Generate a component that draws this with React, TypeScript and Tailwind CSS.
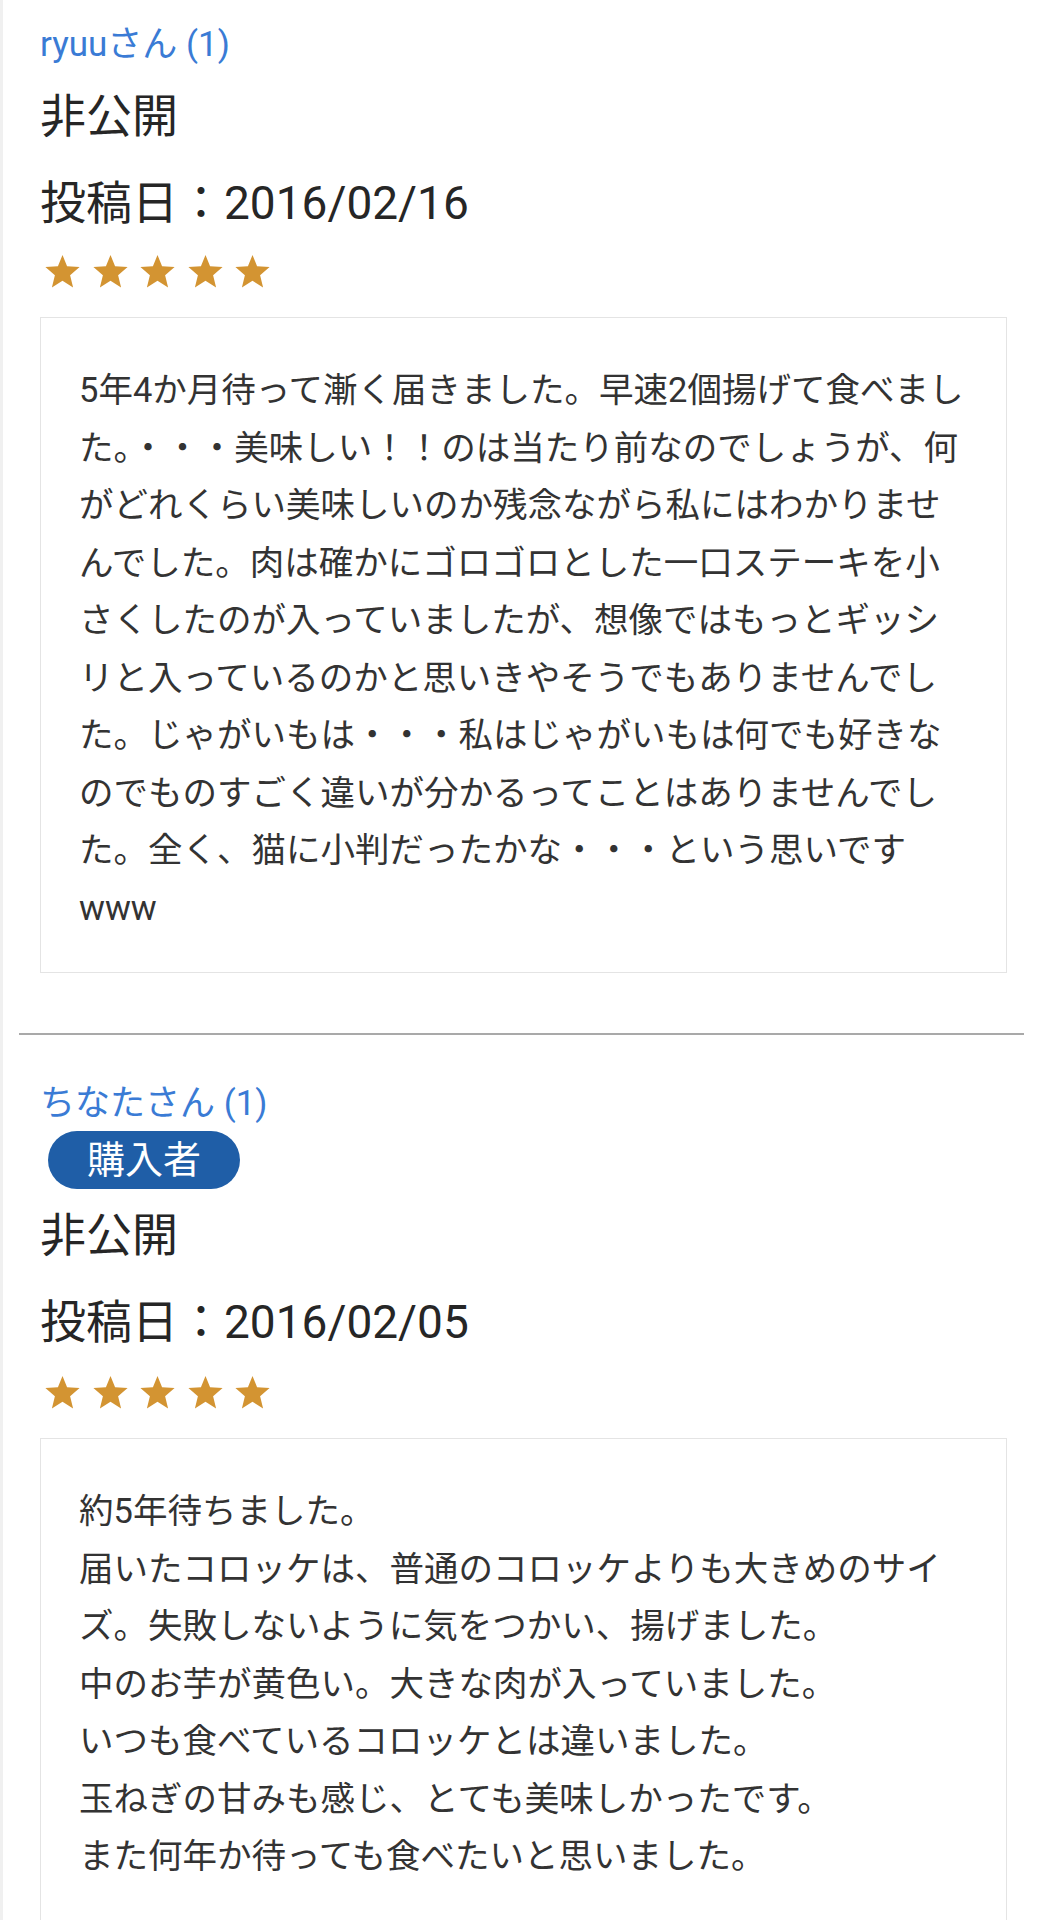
import { Fragment } from "react";

interface Review {
  name: string;
  buyer: boolean;
  date: string;
  lines: string[];
}

const reviews: Review[] = [
  {
    name: "ryuuさん (1)",
    buyer: false,
    date: "2016/02/16",
    lines: [
      "5年4か月待って漸く届きました。早速2個揚げて食べまし",
      "た。・・・美味しい！！のは当たり前なのでしょうが、何",
      "がどれくらい美味しいのか残念ながら私にはわかりませ",
      "んでした。肉は確かにゴロゴロとした一口ステーキを小",
      "さくしたのが入っていましたが、想像ではもっとギッシ",
      "リと入っているのかと思いきやそうでもありませんでし",
      "た。じゃがいもは・・・私はじゃがいもは何でも好きな",
      "のでものすごく違いが分かるってことはありませんでし",
      "た。全く、猫に小判だったかな・・・という思いです",
      "www",
    ],
  },
  {
    name: "ちなたさん (1)",
    buyer: true,
    date: "2016/02/05",
    lines: [
      "約5年待ちました。",
      "届いたコロッケは、普通のコロッケよりも大きめのサイ",
      "ズ。失敗しないように気をつかい、揚げました。",
      "中のお芋が黄色い。大きな肉が入っていました。",
      "いつも食べているコロッケとは違いました。",
      "玉ねぎの甘みも感じ、とても美味しかったです。",
      "また何年か待っても食べたいと思いました。",
    ],
  },
];

const Star = () => (
  <svg viewBox="0 0 24 24" className="w-[39px] h-[38px]" fill="#d39432">
    <polygon points="12,1.2 14.9,8.4 22.8,8.9 16.8,14 18.7,21.8 12,17.6 5.3,21.8 7.2,14 1.2,8.9 9.1,8.4" />
  </svg>
);

const ReviewItem = ({ review, first }: { review: Review; first: boolean }) => {
  return (
    <div className={`pl-[21px] pr-[17px] ${first ? "pt-[25px]" : "pt-[49px]"}`}>
      {/* 投稿者 */}
      <div className="text-[35px] leading-[40px] text-[#3a7bd5]">{review.name}</div>

      {review.buyer && (
        <div className="mt-[7px] ml-[8px] inline-flex h-[58px] items-center rounded-full bg-[#1f5ea7] px-[39px] text-[38px] leading-none text-white">
          購入者
        </div>
      )}

      <div className={`${review.buyer ? "mt-[16px]" : "mt-[21px]"} text-[46px] leading-[60px] text-[#262626]`}>
        非公開
      </div>
      <div className="mt-[27px] text-[46px] leading-[60px] text-[#262626]">
        投稿日：{review.date}
      </div>

      {/* 評価 */}
      <div className={`${first ? "mt-[20px]" : "mt-[22px]"} ml-[3px] flex gap-[8.5px]`}>
        <Star />
        <Star />
        <Star />
        <Star />
        <Star />
      </div>

      {/* 本文 */}
      <div className="mt-[26px] border border-[#e4e4e4] pl-[38px] pr-[20px] pt-[44px] pb-[35px]">
        <p className="whitespace-nowrap text-[34.5px] leading-[57.5px] text-[#333333]">
          {review.lines.map((line, i) => (
            <Fragment key={i}>
              {line}
              {i < review.lines.length - 1 && <br />}
            </Fragment>
          ))}
        </p>
      </div>
    </div>
  );
};

export default function App() {
  return (
    <div
      className="min-h-screen w-full overflow-hidden border-l-[3px] border-[#f0f0f0] bg-white pl-[16px] pr-[24px]"
      style={{ fontFamily: 'Roboto, "Noto Sans CJK JP", sans-serif' }}
    >
      {reviews.map((review, i) => (
        <Fragment key={i}>
          {i > 0 && <div className="mt-[60px] h-[2px] bg-[#a9a9a9]" />}
          <ReviewItem review={review} first={i === 0} />
        </Fragment>
      ))}
    </div>
  );
}
